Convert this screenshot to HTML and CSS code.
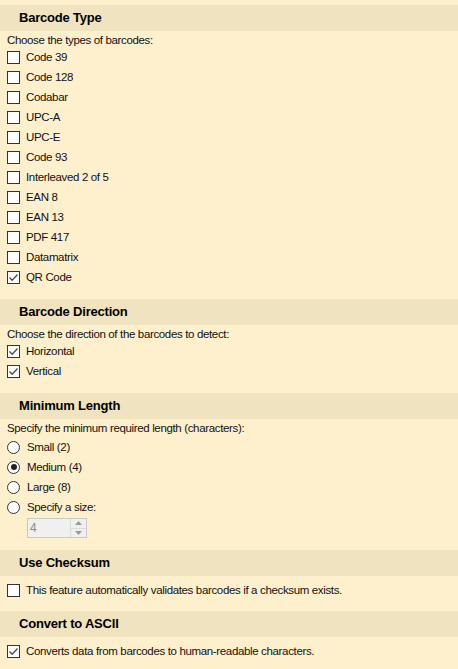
FILE: index.html
```html
<!DOCTYPE html>
<html lang="en">
<head>
  <meta charset="UTF-8" />
  <title>Barcode Settings</title>
  <link rel="stylesheet" href="styles.css">
</head>
<body>
  <div class="panel">

    <section class="section">
      <div class="section-title">Barcode Type</div>
      <div class="desc">Choose the types of barcodes:</div>
      <div class="row"><span class="box"></span>Code 39</div>
      <div class="row"><span class="box"></span>Code 128</div>
      <div class="row"><span class="box"></span>Codabar</div>
      <div class="row"><span class="box"></span>UPC-A</div>
      <div class="row"><span class="box"></span>UPC-E</div>
      <div class="row"><span class="box"></span>Code 93</div>
      <div class="row"><span class="box"></span>Interleaved 2 of 5</div>
      <div class="row"><span class="box"></span>EAN 8</div>
      <div class="row"><span class="box"></span>EAN 13</div>
      <div class="row"><span class="box"></span>PDF 417</div>
      <div class="row"><span class="box"></span>Datamatrix</div>
      <div class="row"><span class="box checked"><svg viewBox="0 0 11 11" width="11" height="11"><path d="M1.5 5.5 L4.2 8.2 L9.5 2.5" fill="none" stroke="#4a4a4a" stroke-width="1.3"/></svg></span>QR Code</div>
    </section>

    <section class="section">
      <div class="section-title">Barcode Direction</div>
      <div class="desc">Choose the direction of the barcodes to detect:</div>
      <div class="row"><span class="box checked"><svg viewBox="0 0 11 11" width="11" height="11"><path d="M1.5 5.5 L4.2 8.2 L9.5 2.5" fill="none" stroke="#4a4a4a" stroke-width="1.3"/></svg></span>Horizontal</div>
      <div class="row"><span class="box checked"><svg viewBox="0 0 11 11" width="11" height="11"><path d="M1.5 5.5 L4.2 8.2 L9.5 2.5" fill="none" stroke="#4a4a4a" stroke-width="1.3"/></svg></span>Vertical</div>
    </section>

    <section class="section">
      <div class="section-title">Minimum Length</div>
      <div class="desc">Specify the minimum required length (characters):</div>
      <div class="radios">
        <div class="row"><span class="radio"></span>Small (2)</div>
        <div class="row"><span class="radio on"></span>Medium (4)</div>
        <div class="row"><span class="radio"></span>Large (8)</div>
        <div class="row"><span class="radio"></span>Specify a size:</div>
      </div>
      <div class="spin">
        <span class="spin-value">4</span>
        <span class="spin-btns">
          <span class="spin-btn"><svg width="7" height="4" viewBox="0 0 7 4"><path d="M0 4 L3.5 0 L7 4 Z" fill="#9a9a9a"/></svg></span>
          <span class="spin-btn"><svg width="7" height="4" viewBox="0 0 7 4"><path d="M0 0 L3.5 4 L7 0 Z" fill="#9a9a9a"/></svg></span>
        </span>
      </div>
    </section>

    <section class="section single">
      <div class="section-title">Use Checksum</div>
      <div class="row"><span class="box"></span>This feature automatically validates barcodes if a checksum exists.</div>
    </section>

    <section class="section single">
      <div class="section-title">Convert to ASCII</div>
      <div class="row"><span class="box checked"><svg viewBox="0 0 11 11" width="11" height="11"><path d="M1.5 5.5 L4.2 8.2 L9.5 2.5" fill="none" stroke="#4a4a4a" stroke-width="1.3"/></svg></span>Converts data from barcodes to human-readable characters.</div>
    </section>

  </div>
</body>
</html>
```

FILE: styles.css
```css
html, body { margin: 0; padding: 0; }
body { background: #fff0cd; font-family: "Liberation Sans", Arial, sans-serif; font-size: 11.5px; letter-spacing: -0.35px; color: #111; }
.panel { padding-top: 5px; width: 458px; height: 669px; overflow: hidden; }

.section { margin-bottom: 12px; }
.section.single { margin-bottom: 11px; }
.section-title { height: 26px; line-height: 26px; background: #efe3c0; padding-left: 19px; font-weight: bold; font-size: 13px; letter-spacing: -0.2px; color: #000; }

.desc { padding: 3px 0 0 7px; line-height: 13px; }
.single .row { margin-top: 4px; }

.row { display: flex; align-items: center; height: 20px; padding-left: 7px; white-space: nowrap; }
.box { width: 11px; height: 11px; border: 1px solid #333; background: #fff; margin-right: 6px; display: flex; align-items: center; justify-content: center; flex: none; }
.box svg { display: block; }

.radios { margin-top: 2px; }
.radio { width: 11px; height: 11px; border: 1px solid #333; border-radius: 50%; background: #fff; margin-right: 7px; flex: none; position: relative; }
.radio.on::after { content: ""; position: absolute; left: 2.5px; top: 2.5px; width: 6px; height: 6px; border-radius: 50%; background: #222; }

.spin { margin: 1px 0 0 27px; width: 58px; height: 18px; border: 1px solid #c8c8c8; background: #f0f0f0; display: flex; justify-content: space-between; }
.spin-value { color: #8a8a8a; line-height: 18px; padding-left: 2px; font-size: 12px; }
.spin-btns { width: 15px; border-left: 1px solid #dcdcdc; display: flex; flex-direction: column; }
.spin-btn { flex: 1; display: flex; align-items: center; justify-content: center; }
.spin-btn + .spin-btn { border-top: 1px solid #dcdcdc; }
```
